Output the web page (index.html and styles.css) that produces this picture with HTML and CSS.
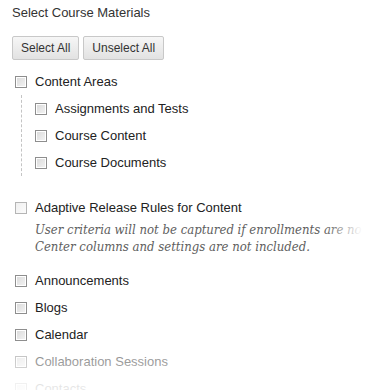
FILE: index.html
```html
<!DOCTYPE html>
<html>
  <head>
    <meta charset="UTF-8" />
    <title>Select Course Materials</title>
    <link rel="stylesheet" href="styles.css">
  </head>
  <body>
    <div class="container">
      <h1>Select Course Materials</h1>

      <div class="button-row">
        <button class="button">Select All</button>
        <button class="button">Unselect All</button>
      </div>

      <ul class="materials">
        <li class="material-item">
          <label class="check-row">
            <span class="checkbox"></span>
            <span>Content Areas</span>
          </label>
          <ul class="sub-list">
            <li class="check-row"><span class="checkbox"></span><span>Assignments and Tests</span></li>
            <li class="check-row"><span class="checkbox"></span><span>Course Content</span></li>
            <li class="check-row"><span class="checkbox"></span><span>Course Documents</span></li>
          </ul>
        </li>

        <li class="material-item adaptive">
          <label class="check-row">
            <span class="checkbox light"></span>
            <span>Adaptive Release Rules for Content</span>
          </label>
          <p class="note">User criteria will not be captured if enrollments are not included. Grade Center columns and settings are not included.</p>
        </li>

        <li class="check-row"><span class="checkbox"></span><span>Announcements</span></li>
        <li class="check-row"><span class="checkbox"></span><span>Blogs</span></li>
        <li class="check-row"><span class="checkbox"></span><span>Calendar</span></li>
        <li class="check-row faded"><span class="checkbox"></span><span>Collaboration Sessions</span></li>
        <li class="check-row faded more"><span class="checkbox"></span><span>Contacts</span></li>
      </ul>
    </div>
    <div class="fade-right"></div>
    <div class="fade-bottom"></div>
  </body>
</html>
```

FILE: styles.css
```css
body {
  margin: 0;
  background-color: white;
  font-family: "Liberation Sans", Arial, sans-serif;
  font-size: 13px;
  color: #222;
  overflow: hidden;
}

.container {
  padding: 5px 0 0 12px;
  width: 460px;
}

h1 {
  font-size: 13px;
  font-weight: normal;
  color: #333;
  margin: 0 0 15px 0;
  line-height: 16px;
}

.button-row {
  display: flex;
  gap: 4px;
  margin-bottom: 8px;
}

.button {
  font-family: inherit;
  font-size: 12px;
  color: #333;
  height: 24px;
  padding: 0 8px;
  border: 1px solid #c8c8c8;
  border-radius: 2px;
  background: linear-gradient(#f6f6f6, #e2e2e2);
}

.materials,
.sub-list {
  list-style: none;
  margin: 0;
  padding: 0;
}

.check-row {
  display: flex;
  align-items: center;
  gap: 8px;
  height: 27px;
  padding-left: 3px;
}

.sub-list {
  margin-left: 9px;
  border-left: 1px dashed #c4c4c4;
  padding-left: 10px;
}

.sub-list .check-row {
  padding-left: 3px;
}

.checkbox {
  box-sizing: border-box;
  width: 12px;
  height: 12px;
  flex-shrink: 0;
  border: 1px solid #8e8e8e;
  background: linear-gradient(135deg, #d9d9d9, #f4f4f4);
  box-shadow: inset 0 0 0 1px #fff;
}

.checkbox.light {
  border-color: #b5b5b5;
  background: linear-gradient(135deg, #f0f0f0, #fbfbfb);
  box-shadow: none;
}

.adaptive {
  margin-top: 18px;
  margin-bottom: 12px;
}

.note {
  margin: 0 0 0 23px;
  font-family: "DejaVu Serif", Georgia, serif;
  font-stretch: condensed;
  font-style: italic;
  font-size: 13px;
  line-height: 17px;
  color: #606060;
}

.faded {
  opacity: 0.55;
}

.faded.more {
  opacity: 0.25;
}

.fade-right {
  position: absolute;
  top: 0;
  right: 0;
  width: 50px;
  height: 100%;
  background: linear-gradient(to right, rgba(255, 255, 255, 0), white 75%);
}

.fade-bottom {
  position: absolute;
  left: 0;
  bottom: 0;
  width: 100%;
  height: 40px;
  background: linear-gradient(rgba(255, 255, 255, 0), rgba(255, 255, 255, 0.6));
}
```
